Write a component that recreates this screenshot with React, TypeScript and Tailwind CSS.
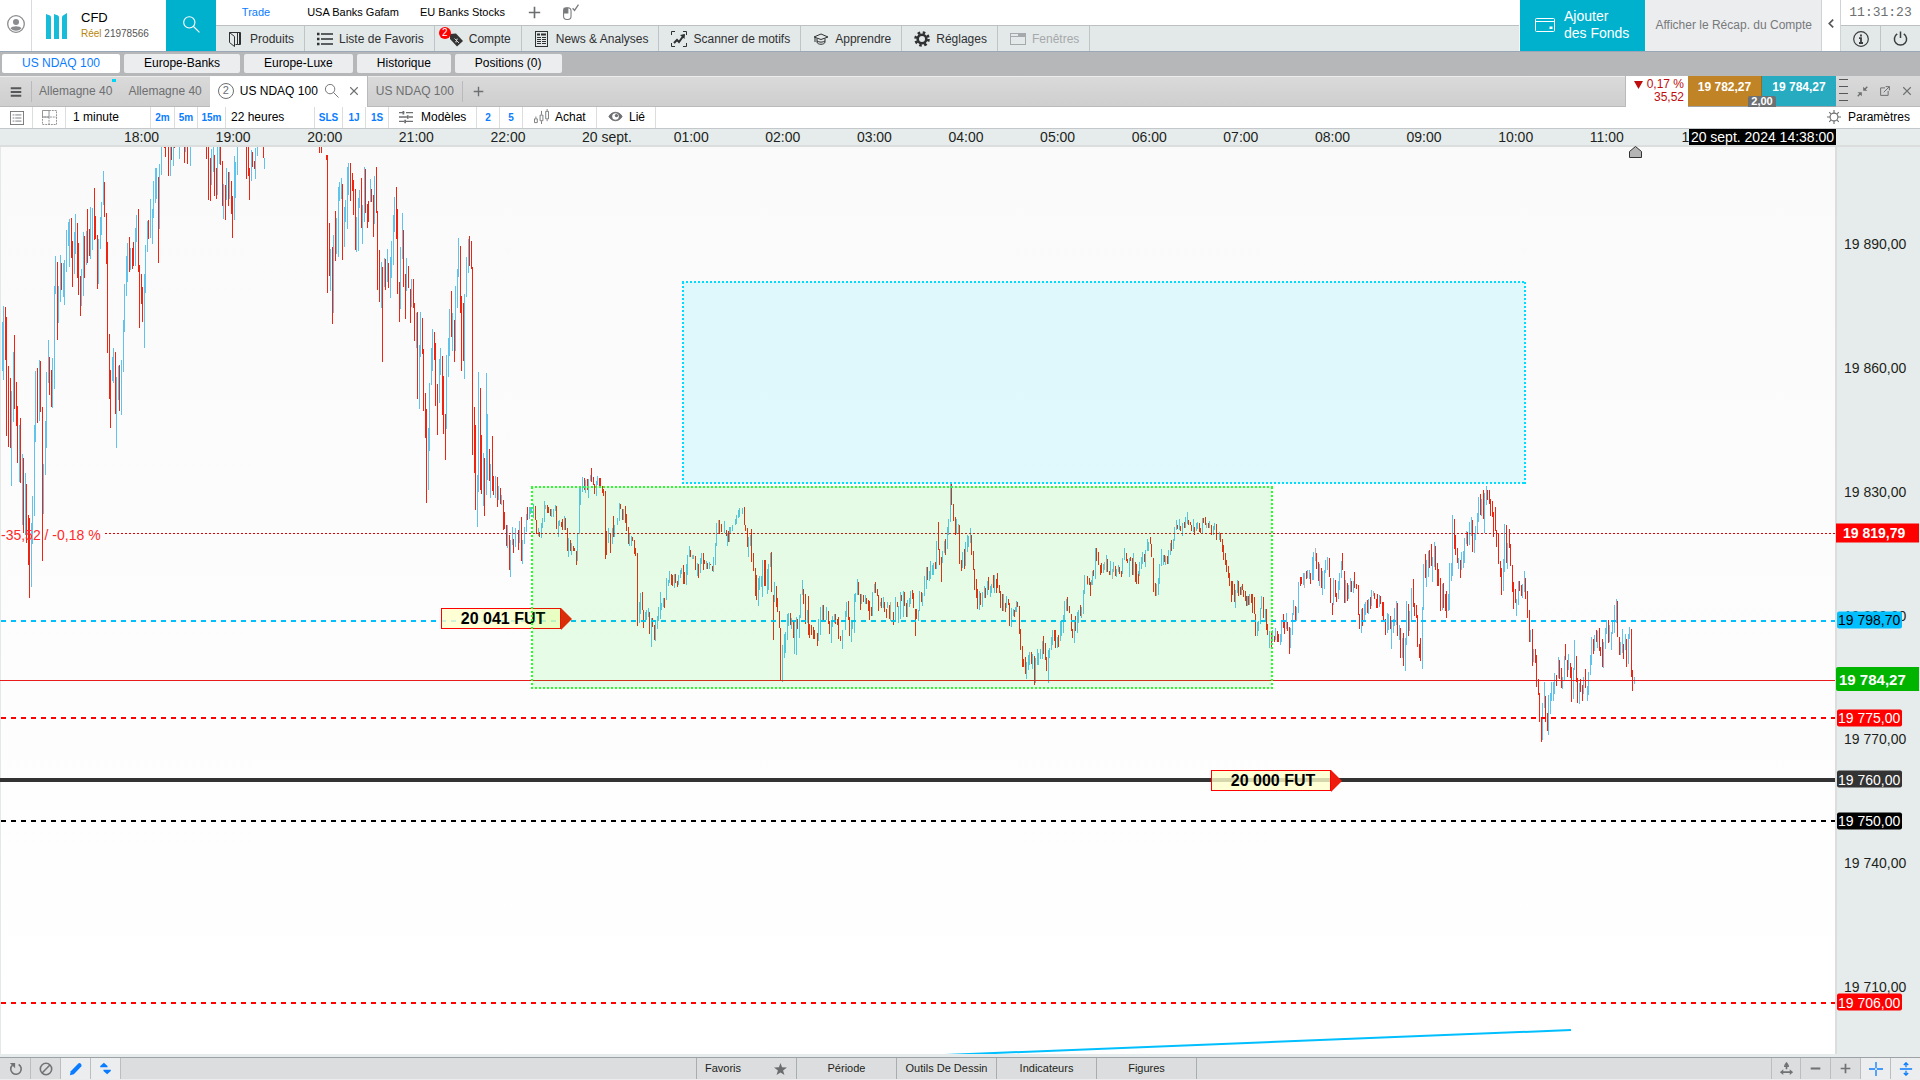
import React from 'react';

// ---------- market data ----------
// each bar is "x high low"; a segment has its own origin and step
type Segment = { ox: number; oy: number; sx: number; up: string; down: string; flat?: string };

const SEGMENTS: Segment[] = [
  {
    ox: 0, oy: -7, sx: 2.8,
    up: '8 546 693,10 498 720,32 753 1038,38 636 846,54 855 1025,63 942 1155,71 999 1185,88 1150 1340,90 1068 1212,96 855 1128,99 693 906,110 660 843,121 972 1121,127 843 1005,130 696 924,136 600 729,147 654 804,152 438 746,155 348 462,163 438 549,169 345 486,177 369 471,180 360 495,186 270 396,191 246 318,194 237 381,208 276 402,211 222 342,228 387 498,233 276 468,242 273 375,253 201 357,259 204 330,275 297 432,281 231 327,284 186 285,289 93 195,315 651 723,317 624 729,326 711 924,331 678 780,340 660 825,345 540 696,348 432 576,354 348 468,357 309 426,365 324 390,379 264 378,382 225 306,404 402 624,407 315 459,413 243 336,421 177 294,427 207 312,429 123 234,435 84 189,438 84 177,446 72 267,452 18 105,477 18 108,485 18 78,502 18 57,519 18 36,533 18 78,592 27 135,597 18 96,608 18 165,614 18 72,625 132 237,634 84 180,642 96 177,656 48 240,659 66 174,664 18 105,704 30 123,715 24 117,720 18 48,740 54 87,925 327 453,933 285 519,942 234 342,947 141 351,950 126 183,956 114 177,964 201 321,967 180 246,972 81 267,975 69 165,998 231 336,1003 174 333,1006 150 204,1014 195 312,1020 81 246,1037 117 186,1048 108 252,1068 366 504,1076 354 441,1085 327 426,1093 351 474,1096 303 414,1101 225 375,1104 171 276,1121 321 507,1127 219 357,1138 354 453,1152 417 501,1166 519 624,1174 615 807,1177 516 651,1199 864 1050,1202 729 933,1208 624 735,1211 567 693,1230 657 789,1233 624 705,1250 645 867,1255 594 711,1258 507 648,1266 519 633,1275 438 633,1281 387 504,1283 294 411,1300 462 717,1306 351 471,1311 297 399,1337 1005 1161,1339 696 1056,1353 939 1098,1362 699 1065,1364 822 1020,1373 972 1074,1387 1008 1074,1396 1038 1080,1404 1065 1095,1421 1155 1224,1429 1200 1311,1435 1161 1215,1443 1164 1221,1454 1143 1209,1463 1200 1272,1468 1161 1212,1474 1122 1176,1482 1101 1137',
    down: '15 501 660,18 531 888,23 678 921,29 714 924,40 585 807,46 726 858,49 798 969,57 834 1029,65 954 1179,74 1032 1209,79 1125 1275,82 1134 1374,104 684 849,113 663 816,119 801 1263,138 651 765,144 690 801,161 366 600,172 369 450,200 234 354,203 303 441,217 249 414,219 309 465,225 408 528,236 288 414,245 207 369,250 267 348,264 144 300,267 228 297,273 285 447,292 126 231,298 219 372,301 306 639,306 582 777,309 690 864,323 636 822,334 675 813,362 291 396,371 324 387,373 306 378,387 207 396,390 375 564,396 402 492,398 441 546,415 240 297,443 111 369,460 18 24,463 18 51,471 18 108,480 18 60,488 18 24,516 18 69,525 18 72,578 18 57,583 18 180,589 54 183,600 45 168,606 84 177,617 18 75,622 63 198,631 135 240,639 96 198,648 123 222,650 168 294,690 18 117,695 18 108,698 84 180,707 36 81,712 63 87,737 18 54,894 18 39,900 18 39,914 45 60,917 45 459,922 249 408,931 321 552,939 213 363,958 132 360,981 69 183,986 99 153,989 120 225,995 147 330,1012 114 264,1023 87 219,1029 192 264,1031 183 246,1040 147 186,1045 165 291,1054 81 219,1057 213 450,1062 330 486,1070 381 666,1079 357 450,1087 369 444,1110 141 297,1113 207 462,1118 426 546,1129 270 441,1135 402 537,1143 378 444,1149 447 549,1157 417 504,1160 489 603,1168 516 777,1182 534 642,1185 627 813,1191 759 894,1194 807 1089,1216 576 660,1219 609 798,1225 732 885,1239 648 825,1241 708 882,1247 822 960,1264 453 591,1272 540 666,1289 318 519,1292 468 693,1297 489 663,1314 288 378,1320 303 387,1323 381 945,1328 801 999,1331 855 1110,1345 744 1050,1348 885 1062,1356 954 1128,1370 927 1023,1378 888 1053,1381 1008 1065,1393 1011 1101,1401 1044 1092,1409 1080 1170,1412 1116 1167,1418 1155 1218,1426 1185 1290,1437 1197 1239,1451 1170 1230,1460 1131 1263,1477 1101 1137',
  },
  {
    ox: 500, oy: 293, sx: 3,
    up: '88 204 219,91 201 222,94 201 219,100 192 234,115 264 288,124 249 294,127 234 264,133 183 246,154 207 231,160 207 231,166 195 213,175 243 291,178 240 258,193 228 270,205 294 351,214 309 345,232 279 363,238 144 282,241 144 195,247 111 156,256 120 159,265 117 174,271 105 123,289 123 168,292 108 135,325 264 309,337 264 312,343 255 291,352 234 255,358 189 243,370 207 240,388 279 318,394 288 318,418 486 549,421 459 522,436 516 543,439 510 540,445 504 531,454 534 621,466 546 603,472 528 567,475 501 543,481 456 537,484 489 510,490 474 501,499 414 480,505 420 438,508 393 430,523 402 444,535 405 435,541 390 414,544 384 402,559 372 435,562 345 405,568 318 351,580 345 357,592 369 408,601 354 399,604 339 372,619 363 388,628 366 388,640 351 396,646 309 375,649 249 318,673 243 279,682 279 318,688 261 306,691 261 282,697 255 273,706 237 255,709 225 252,715 210 234,718 204 231,727 204 222,745 291 351,751 285 318,775 414 498,778 408 450,784 408 441,787 360 471,802 387 462,805 372 450,811 339 381,823 426 486,847 615 726,853 582 654,856 576 639,862 522 600,865 519 558,874 534 567,883 540 642,889 531 645,898 525 594,901 462 534,907 420 465,922 510 550,955 537 603,961 501 585,967 495 540,979 501 540,994 546 609,997 528 561,1003 522 549,1027 570 627,1036 513 570,1039 486 531,1054 543 606,1057 540 567,1063 462 579,1066 459 486,1072 417 465,1084 462 492,1096 465 492,1117 456 528,1123 432 460,1141 486 498,1150 471 504,1162 486 504,1186 471 540,1195 498 549,1201 456 537,1210 453 531,1222 480 531,1228 474 501,1231 453 492,1255 510 543,1258 453 513,1267 459 498,1273 408 468,1279 381 447,1288 393 423,1291 363 417,1297 375 405,1300 369 405',
    down: '82 201 240,106 198 240,109 240 282,118 276 291,142 195 219,145 201 219,151 207 228,169 198 267,184 246 261,187 237 270,196 234 270,202 264 333,211 300 333,220 318 333,223 324 333,229 333 375,253 114 150,262 117 150,274 84 126,280 111 135,283 132 162,298 114 138,301 114 138,307 138 159,310 147 168,316 153 357,319 273 345,331 279 339,340 228 291,361 192 207,367 207 240,376 198 249,379 222 273,385 261 312,397 291 303,403 300 342,406 324 348,412 339 558,427 456 510,430 510 564,448 516 582,457 534 561,463 555 600,493 474 504,514 402 435,517 405 438,526 402 430,532 423 441,550 375 432,553 396 432,571 330 350,586 348 390,595 372 414,610 339 390,613 360 372,622 369 388,631 372 375,637 378 393,658 240 282,664 252 276,679 270 288,685 273 306,733 201 255,736 255 273,742 264 321,754 267 366,760 339 393,766 384 468,769 405 480,793 360 438,796 360 438,814 336 456,820 465 600,829 438 501,832 474 516,838 513 564,841 564 720,871 519 555,880 546 594,892 537 567,910 447 492,916 462 552,925 468 585,928 552 594,934 555 585,940 561 597,943 570 597,952 579 618,970 495 543,985 513 552,988 543 582,1006 522 552,1012 537 555,1015 531 597,1021 588 603,1045 483 540,1048 531 588,1075 426 465,1081 462 510,1090 465 486,1099 474 492,1105 480 513,1108 483 540,1114 501 528,1126 426 459,1132 447 468,1135 465 513,1144 474 504,1153 486 516,1159 507 534,1168 495 537,1180 516 555,1192 486 501,1204 465 483,1213 456 498,1219 489 531,1237 450 477,1240 459 504,1246 507 588,1249 507 537,1264 456 486,1282 381 420,1306 366 387',
    flat: '136 195 207,655 240 282,577 345 357,1171 486 543',
  },
  {
    ox: 900, oy: 293, sx: 3,
    up: '109 303 387,127 333 369,133 303 339,142 261 327,145 237 285,151 126 246,169 237 282,187 336 384,196 306 378,202 285 336,205 288 320,211 264 309,238 453 510,247 456 501,253 438 474,262 423 465,271 438 471,274 432 460,283 405 459,310 462 513,319 468 504,334 504 561,340 507 528,346 501 516,349 483 516,379 666 717,385 645 690,388 636 675,397 642 687,406 654 730,412 627 675,415 639 675,421 627 657,427 603 657,445 630 729,448 624 654,454 591 630,457 570 615,472 591 624,481 543 603,484 543 588,490 525 579,493 483 543,499 477 513,523 543 609,532 516 579,535 510 549,544 501 534,550 450 522,553 405 462,562 408 435,574 420 435,577 393 435,586 324 417,610 372 399,619 345 396,631 363 405,640 366 396,649 387 411,655 375 396,667 354 402,673 324 360,688 354 411,700 339 405,715 393 432,718 366 408,724 351 387,727 336 372,736 330 381,742 297 333,745 306 333,775 414 465,778 372 432,784 327 378,790 345 375,796 348 375,805 330 372,811 309 345,820 297 327,823 261 303,829 240 270,838 237 270,847 249 288,856 231 264,862 216 252,880 237 276,889 249 273,892 246 267,907 234 279,928 243 264,940 258 285,943 249 270,958 276 300,1006 450 504,1012 420 459,1024 438 465,1042 468 498,1048 462 495,1072 546 588,1075 543 573,1081 504 552,1084 468 507,1096 507 540,1108 573 624',
    down: '115 246 330,118 327 375,124 351 426,136 297 345,154 132 195,160 192 243,166 231 285,178 255 372,184 360 393,193 327 387,214 285 345,220 333 390,223 387 450,229 417 474,232 447 507,241 459 495,256 444 474,265 411 450,280 405 444,289 417 459,292 399 444,298 435 459,301 453 504,307 462 513,316 489 516,325 477 495,328 489 558,343 510 531,352 486 501,358 498 582,361 567 630,367 618 681,370 657 681,376 651 702,394 636 672,403 648 735,430 588 642,436 609 660,439 651 693,463 570 603,466 570 624,475 585 621,502 471 513,508 498 519,514 522 573,517 567 594,526 528 573,541 495 528,562 408 432,568 414 435,571 426 468,580 390 407,589 324 363,595 336 375,601 375 405,604 369 399,622 357 396,628 393 405,646 378 408,658 381 402,664 393 411,679 339 363,682 357 369,691 351 363,697 354 405,706 366 426,709 372 432,715 402 432,733 342 366,751 291 312,754 312 351,760 354 456,766 429 468,793 345 366,802 348 372,814 300 333,832 255 267,841 258 273,853 246 264,865 240 255,871 246 255,874 255 273,883 261 285,898 249 276,901 264 279,910 234 249,916 231 255,925 249 264,934 255 285,949 252 300,961 279 306,967 297 336,970 315 360,976 339 375,979 360 396,985 378 414,988 399 438,994 423 486,997 423 465,1003 432 486,1015 423 468,1021 441 465,1027 432 450,1030 450 471,1036 453 483,1039 468 498,1045 468 495,1054 462 489,1057 462 519,1063 471 522,1066 522 588,1090 471 534,1099 507 570,1102 552 585,1114 573 621',
    flat: '175 252 282,613 366 390,637 387 417,769 432 468,919 249 264',
  },
  {
    ox: 1270, oy: 293, sx: 3,
    up: '7 570 606,16 564 600,31 582 615,34 543 606,49 519 567,61 564 624,67 519 585,70 480 525,79 501 543,85 426 519,100 399 435,112 390 414,118 390 417,127 351 420,130 336 420,148 372 438,157 393 465,163 390 447,166 360 399,172 351 390,190 414 495,205 423 477,208 399 450,214 363 414,226 420 489,235 435 477,241 414 456,250 423 459,274 507 579,283 492 540,286 486 525,295 477 522,304 450 498,328 465 501,352 519 579,355 522 570,364 540 627,370 537 579,373 504 558,379 483 555,388 555 600,397 594 654,406 594 693,409 483 615,418 513 573,424 444 540,457 501 687,460 372 510,469 360 441,475 333 411,487 351 426,493 306 381,517 432 510,535 462 513,538 369 510,544 369 423,547 225 408,565 354 387,574 336 390,580 333 384,583 294 369,589 273 312,598 246 315,604 231 288,613 282 339,616 258 300,622 219 279,625 171 246,634 177 228,643 159 279,649 138 195,700 357 453,703 252 396,712 309 387,739 477 528,745 423 495,757 432 474,763 393 456,781 570 606,790 627 666,817 789 900,823 726 804,835 765 885,841 759 822,844 726 783,850 726 783,853 699 762,865 651 714,877 711 747,883 648 720,895 642 690,910 684 777,913 600 690,928 729 792,940 711 762,952 738 783,955 696 765,961 645 705,964 591 675,973 585 633,982 573 624,1000 606 684,1006 564 627,1009 540 582,1018 555 606,1024 576 630,1027 543 582,1033 495 579,1039 477 549,1051 606 645,1057 567 639,1066 582 630,1075 582 672,1078 561 597,1093 711 732',
    down: '4 573 621,13 588 606,22 573 606,25 582 606,40 522 564,43 546 582,52 546 573,58 561 642,76 498 543,91 411 438,94 411 432,109 393 417,121 399 432,139 339 387,145 366 423,154 384 444,178 354 411,181 414 489,187 489 525,196 420 471,199 459 486,217 339 390,223 393 489,232 429 483,244 423 456,253 396 444,259 432 447,265 435 525,268 522 567,277 504 558,292 480 519,301 471 507,313 459 477,319 477 504,322 462 504,331 468 492,337 486 528,340 486 540,346 537 585,361 528 567,382 489 588,391 564 654,400 579 678,415 492 588,430 417 501,433 489 528,439 495 534,442 525 621,448 612 654,451 594 663,466 342 414,478 330 384,484 312 378,496 318 390,502 369 438,505 387 438,511 414 513,520 429 504,526 462 513,529 453 534,553 237 327,556 285 345,562 324 369,571 360 414,592 276 318,607 240 336,631 162 225,640 150 237,652 150 180,658 150 192,661 177 228,667 183 231,670 216 291,676 201 273,679 270 321,685 279 372,691 363 411,694 384 465,709 255 369,718 267 324,721 312 378,727 375 456,730 426 507,736 447 489,748 423 453,754 435 468,766 414 477,772 453 534,778 510 606,787 567 678,796 627 669,799 645 741,805 717 765,808 759 846,814 834 906,826 768 846,832 819 873,859 705 738,868 660 717,874 684 744,886 612 660,892 660 711,901 669 714,904 681 786,919 648 726,922 714 789,931 717 756,937 735 783,946 687 744,970 597 642,979 570 606,988 564 633,991 621 648,997 597 681,1015 540 609,1042 483 591,1048 591 645,1060 612 657,1069 597 681,1084 567 711,1087 690 753',
    flat: '103 399 444,136 324 363,310 453 468',
  },
];

const toPath = (seg: Segment, data = '') =>
  data
    .split(',')
    .filter(Boolean)
    .map((bar) => {
      const [x, hi, lo] = bar.split(' ').map(Number);
      return `M${seg.ox + Math.floor(x / seg.sx) + 0.5} ${Math.round(hi / 3) + seg.oy}V${Math.round(lo / 3) + seg.oy}`;
    })
    .join('');

const HOURS = ['18:00', '19:00', '20:00', '21:00', '22:00', '20 sept.', '01:00', '02:00', '03:00', '04:00', '05:00', '06:00', '07:00', '08:00', '09:00', '10:00', '11:00', '12:00'];
const PRICES = ['19 890,00', '19 860,00', '19 830,00', '19 800,00', '19 770,00', '19 740,00', '19 710,00'];

const CHART_H = 907;
const priceY = (p: number) => 343.5 + (19830 - p) * 4.128;
const topOf = (p: number) => ({ top: `${(priceY(p) / CHART_H) * 100}%` });

const TAGS = [
  { price: 19819.79, label: '19 819,79', cls: '-left-px right-px h-[19px] pl-[7px] bg-[#ff0000] text-white font-bold text-sm' },
  { price: 19798.7, label: '19 798,70', cls: 'left-0 w-[65px] h-[17px] pl-px rounded-xs bg-[#00bfff] text-black text-sm' },
  { price: 19784.27, label: '19 784,27', cls: '-left-px right-px h-6 pl-[3px] rounded-l-xs bg-[#00b400] text-white font-bold text-[15px]' },
  { price: 19775, label: '19 775,00', cls: 'left-0 w-[65px] h-[17px] pl-px rounded-xs bg-[#ff0000] text-white text-sm' },
  { price: 19760, label: '19 760,00', cls: 'left-0 w-[65px] h-[17px] pl-px rounded-xs bg-[#333333] text-white text-sm' },
  { price: 19750, label: '19 750,00', cls: 'left-0 w-[65px] h-[17px] pl-px rounded-xs bg-black text-white text-sm' },
  { price: 19706, label: '19 706,00', cls: 'left-0 w-[65px] h-[17px] pl-px rounded-xs bg-[#ff0000] text-white text-sm' },
];

// ---------- icons ----------
const Icon = ({ size = 16, className = '', children }: { size?: number; className?: string; children: React.ReactNode }) => (
  <svg width={size} height={size} viewBox="0 0 16 16" fill="none" stroke="currentColor" className={`shrink-0 ${className}`} aria-hidden="true">
    {children}
  </svg>
);

const BookIcon = () => (
  <Icon>
    <path d="M1.5 1.5h8v12h-2M1.5 1.5v10l5 4v-10zM1.5 1.5h11v12h-3" />
    <path d="M12 2v11" strokeWidth="2" />
  </Icon>
);
const ListIcon = () => (
  <Icon>
    <path d="M4 3h12M4 8h12M4 13h12" strokeWidth="1.5" />
    <path d="M0 3h2.5M0 8h2.5M0 13h2.5" strokeWidth="2.5" />
  </Icon>
);
const NewsIcon = () => (
  <Icon>
    <rect x="1.5" y=".5" width="12" height="15" />
    <path d="M3 3.5h3M7 3.5h5" strokeWidth="2" />
    <path d="M3 6.5h4M8 6.5h4M3 8.5h4M8 8.5h4M3 10.5h4M8 10.5h4M3 12.5h4M8 12.5h4" />
  </Icon>
);
const ScanIcon = () => (
  <Icon>
    <path d="M.5 4V.5H4M12 .5h3.5V4M.5 12v3.5H4M12 15.5h3.5V12" />
    <path d="M3 12l3-3 2 2 5-7" strokeWidth="2" />
    <path d="M9 4l5-1-.5 5z" fill="currentColor" stroke="none" />
  </Icon>
);
const LearnIcon = () => (
  <Icon>
    <path d="M1 6l7-3 7 3-7 2.5zM4 7.5V11c0 3 8 3 8 0V7.5M4 10c2 1.5 6 1.5 8 0M2 6.5V11" />
  </Icon>
);
const GearIcon = () => (
  <Icon>
    <circle cx="8" cy="8" r="4.3" strokeWidth="2.6" />
    <circle cx="8" cy="8" r="6.5" strokeWidth="2.6" strokeDasharray="2.55 2.55" />
  </Icon>
);
const WindowIcon = () => (
  <Icon>
    <rect x=".5" y="2.5" width="15" height="11" />
    <path d="M1 5.5h14" />
    <path d="M8 4h7" strokeWidth="2" />
  </Icon>
);
const TagIcon = () => (
  <span className="relative flex">
    <Icon>
      <path d="M3 3l6-.5 7 7.5-6 5.5L3 8z" fill="#333" stroke="none" />
      <path d="M11 8.5c-1-1-2.5 0-1.5 1s0 2-1.5 1M7.5 7.5l4.5 4.5" stroke="#e3e8e8" strokeWidth=".9" />
    </Icon>
    <span className="absolute -top-1 -left-2 flex h-3 w-3 items-center justify-center rounded-full bg-[#ff0000] text-[10px] text-white">2</span>
  </span>
);
const SearchIcon = ({ size = 16, className = '' }) => (
  <Icon size={size} className={className}>
    <circle cx="6.5" cy="6.5" r="5" />
    <path d="M10 10l5.5 5.5" />
  </Icon>
);
const CloseIcon = ({ size = 10 }) => (
  <Icon size={size}>
    <path d="M2 2l12 12M14 2L2 14" strokeWidth="1.8" />
  </Icon>
);
const PlusIcon = ({ size = 12 }) => (
  <Icon size={size}>
    <path d="M8 1v14M1 8h14" strokeWidth="2" />
  </Icon>
);

// ---------- header ----------
const MENU = [
  { label: 'Produits', icon: <BookIcon /> },
  { label: 'Liste de Favoris', icon: <ListIcon /> },
  { label: 'Compte', icon: <TagIcon /> },
  { label: 'News & Analyses', icon: <NewsIcon /> },
  { label: 'Scanner de motifs', icon: <ScanIcon /> },
  { label: 'Apprendre', icon: <LearnIcon /> },
  { label: 'Réglages', icon: <GearIcon /> },
  { label: 'Fenêtres', icon: <WindowIcon />, disabled: true },
];

const Header = () => (
  <header className="flex h-[52px] shrink-0 border-b border-[#9ba6b6] bg-white">
    <button aria-label="Profil" className="flex w-8 items-center justify-center border-r border-[#d9dadb] pb-1 text-[#8a8c8e]">
      <svg width="18" height="18" viewBox="0 0 18 18" fill="none" stroke="currentColor">
        <circle cx="9" cy="9" r="8.3" strokeWidth="1.3" />
        <circle cx="9" cy="7" r="3" fill="currentColor" stroke="none" />
        <path d="M3.5 13.5c1-3 10-3 11 0a8 8 0 0 1-11 0z" fill="currentColor" stroke="none" />
      </svg>
    </button>
    <div className="flex w-[134px] items-center gap-3.5 pl-3.5">
      <svg width="21" height="26" viewBox="0 0 21 26" fill="#17bcd8">
        <path d="M0 1l4 1.5q1 .5 1 2V26H0zM8 1l4 1.5q1 .5 1 2V26H8zM21 0v26h-5V4.5q0-1.5 1-2z" />
      </svg>
      <div className="leading-4">
        <p className="text-[13px] text-black">CFD</p>
        <p className="text-[10px] whitespace-nowrap text-[#555]"><span className="text-[#b8860b]">Réel</span> 21978566</p>
      </div>
    </div>
    <button aria-label="Rechercher" className="flex w-[50px] items-center justify-center bg-[#00b1cd] pb-1 text-white">
      <SearchIcon size={18} />
    </button>
    <div className="flex min-w-0 flex-1 flex-col">
      <div className="flex h-[26px] items-center border-b border-[#bcc0c3] text-[11px] text-black">
        <button className="w-20 text-[#0a7cff]">Trade</button>
        <button className="w-[114px]">USA Banks Gafam</button>
        <button className="w-[105px]">EU Banks Stocks</button>
        <button aria-label="Ajouter un espace" className="flex w-[38px] justify-center text-[#6b6d6f]"><PlusIcon size={13} /></button>
        <button aria-label="Verrouiller" className="flex w-[34px] justify-center text-[#77797b]">
          <Icon size={17}>
            <rect x="1.5" y="3.5" width="7" height="11" rx="3" />
            <path d="M2 4h3.5v4.5H2z" fill="currentColor" />
            <path d="M10 4l1.8 2L15.5.5" strokeWidth="1.2" />
          </Icon>
        </button>
      </div>
      <nav className="flex flex-1 bg-[#e3e8e8] text-xs text-[#2f3133]">
        {MENU.map((m) => (
          <button
            key={m.label}
            disabled={m.disabled}
            className={`flex shrink-0 items-center gap-1.5 border-r border-[#bfc4c6] pr-[10px] pl-3 whitespace-nowrap ${m.disabled ? 'text-[#a6a9ab]' : ''}`}
          >
            {m.icon}
            {m.label}
          </button>
        ))}
      </nav>
    </div>
    <button className="ml-px flex w-[125px] items-center gap-[9px] bg-[#00b1cd] pb-0.5 pl-[15px] text-left text-sm leading-[17px] text-white">
      <svg width="20" height="14" viewBox="0 0 20 14" fill="none" stroke="currentColor">
        <rect x=".5" y=".5" width="19" height="13" rx="1" />
        <path d="M1 3.5h18" />
        <path d="M14.5 8.5h3v2.5h-3z" fill="currentColor" stroke="none" />
      </svg>
      <span>Ajouter<br />des Fonds</span>
    </button>
    <button className="w-44 bg-[#ecedef] pr-[9px] pb-0.5 text-right text-xs whitespace-nowrap text-[#77797b]">Afficher le Récap. du Compte</button>
    <button aria-label="Réduire" className="flex w-5 items-center justify-center border-x border-[#d0d3d5] pb-1 text-[#55575a]">
      <Icon size={9}><path d="M11 1L4 8l7 7" strokeWidth="3" /></Icon>
    </button>
    <div className="flex w-[79px] flex-col">
      <time className="flex h-[26px] items-center justify-center border-b border-[#bcc0c3] font-['Liberation_Mono',monospace] text-[13px] text-[#6d6f71]">11:31:23</time>
      <div className="flex flex-1 bg-[#e3e8e8] text-[#3a3c3e]">
        <button aria-label="Informations" className="flex flex-1 items-center justify-center border-r border-[#bfc4c6]">
          <Icon>
            <circle cx="8" cy="8" r="7.3" strokeWidth="1.2" />
            <path d="M8 3.5v2M6 7.2h2V12M6 12h4" strokeWidth="1.8" />
          </Icon>
        </button>
        <button aria-label="Quitter" className="flex flex-1 items-center justify-center">
          <Icon size={15}>
            <path d="M4.5 3a6.5 6.5 0 1 0 7 0M8 .5v7" strokeWidth="1.6" />
          </Icon>
        </button>
      </div>
    </div>
  </header>
);

const WORKSPACES = ['US NDAQ 100', 'Europe-Banks', 'Europe-Luxe', 'Historique', 'Positions (0)'];

const Workspaces = () => (
  <nav className="flex h-6 shrink-0 gap-1 bg-[#b5b7b9] px-0.5 pt-0.5 pb-[3px] text-xs">
    {WORKSPACES.map((w, i) => (
      <button key={w} className={`rounded-xs px-5 pb-0.5 ${i === 0 ? 'bg-white text-[#0a7cff]' : 'bg-[#ecedef] text-black'}`}>
        {w}
      </button>
    ))}
  </nav>
);

// ---------- instrument tabs + quote ----------
const InstrumentBar = () => (
  <div className="flex h-[31px] shrink-0 bg-linear-to-b from-[#dadada] to-[#cecece] text-xs text-[#6d6f71]">
    <div className="flex min-w-0 flex-1 border-t border-b border-t-[#ececec] border-b-[#b9babb]">
      <button aria-label="Menu" className="my-1 flex w-8 items-center justify-center border-r border-[#b9babb] text-[#555759]">
        <Icon size={12}><path d="M1 3h14M1 8h14M1 13h14" strokeWidth="2.5" /></Icon>
      </button>
      <button className="relative pr-2 pb-0.5 pl-[7px]">
        Allemagne 40
        <span className="absolute top-0.5 right-1 h-[3px] w-1 bg-[#00d5f5]" />
      </button>
      <button className="px-2 pb-0.5">Allemagne 40</button>
      <div className="-my-px flex items-center gap-1.5 border-r border-[#b9babb] bg-white px-2 pb-0.5">
        <span className="flex h-4 w-4 items-center justify-center rounded-full border border-[#6d6f71] text-[11px]">2</span>
        <button className="text-black">US NDAQ 100</button>
        <button aria-label="Chercher un produit"><SearchIcon size={15} /></button>
        <button aria-label="Fermer l'onglet" className="ml-1"><CloseIcon /></button>
      </div>
      <button className="px-2 pb-0.5">US NDAQ 100</button>
      <button aria-label="Nouvel onglet" className="my-1 flex w-8 items-center justify-center border-l border-[#b9babb]"><PlusIcon size={11} /></button>
    </div>
    <div className="w-[63px] border-l border-[#b9babb] bg-white pt-0.5 pr-1 text-right leading-[13px] text-[#c00d0d]">
      <p className="flex items-center justify-end gap-1">
        <svg width="9" height="8" viewBox="0 0 9 8" fill="currentColor"><path d="M0 0h9L4.5 8z" /></svg>
        0,17 %
      </p>
      <p>35,52</p>
    </div>
    <div className="relative flex border-b border-[#a0a3a5] font-bold text-white">
      <button className="w-[74px] border-r border-[#9a6a1e] bg-[#c08326] pb-2">19 782,27</button>
      <button className="w-[74px] bg-[#27abc0] pb-2">19 784,27</button>
      <span className="absolute -bottom-px left-[60px] flex h-[11px] w-7 items-center justify-center rounded-t-xs bg-[#6d7173] text-[11px]">2,00</span>
    </div>
    <div className="flex w-[84px] items-center justify-between border-b border-[#b9babb] pr-2 pl-[3px]">
      <svg width="9" height="26" viewBox="0 0 9 26" stroke="#55585a" className="shrink-0"><path d="M0 1.5h9M0 8.5h9M0 15.5h9M0 22.5h9" /></svg>
      <div className="flex items-center gap-3">
        <button aria-label="Réduire">
          <Icon size={11}>
            <path d="M15 1l-4 4M1 15l4-4" strokeWidth="2" />
            <path d="M9 1v6h6zM1 9h6v6z" fill="currentColor" stroke="none" />
          </Icon>
        </button>
        <button aria-label="Détacher">
          <Icon size={10}><path d="M8 3H1v12h12V8M9 1h6v6M15 1L6 10" strokeWidth="1.6" /></Icon>
        </button>
        <button aria-label="Fermer"><CloseIcon /></button>
      </div>
    </div>
  </div>
);

// ---------- chart toolbar ----------
const cell = 'flex shrink-0 items-center border-r border-[#dcdddd]';
const quick = 'justify-center text-[10px] font-bold text-[#0a7cff]';

const Toolbar = () => (
  <div className="flex h-[22px] shrink-0 border-b border-[#c5c8ca] bg-white text-xs text-black">
    <button aria-label="Liste" className={`${cell} w-[33px] justify-center pl-0.5 text-[#6d6f71]`}>
      <Icon size={14}><rect x=".5" y=".5" width="15" height="15" /><path d="M3 4.5h2M6 4.5h7M3 8h2M6 8h7M3 11.5h2M6 11.5h7" /></Icon>
    </button>
    <button aria-label="Grille" className={`${cell} w-[33px] justify-center text-[#8a8c8e]`}>
      <Icon size={15}><path d="M.5.5h7v7h-7z" /><path d="M7.5.5h8v15H.5v-8h15M7.5 7.5v8" strokeDasharray="2 1" /></Icon>
    </button>
    <button className={`${cell} w-[85px] pb-0.5 pl-[7px]`}>1 minute</button>
    <button className={`${cell} ${quick} w-6`}>2m</button>
    <button className={`${cell} ${quick} w-[23px]`}>5m</button>
    <button className={`${cell} ${quick} w-7`}>15m</button>
    <button className={`${cell} w-[89px] pb-0.5 pl-[5px]`}>22 heures</button>
    <button className={`${cell} ${quick} w-7`}>SLS</button>
    <button className={`${cell} ${quick} w-[23px]`}>1J</button>
    <button className={`${cell} ${quick} w-[23px]`}>1S</button>
    <button className={`${cell} w-[88px] gap-2 pb-0.5 pl-[10px]`}>
      <Icon size={14} className="text-[#6d6f71]">
        <path d="M0 3h6M8 3h8M0 8h9M11 8h5M0 13h6M8 13h8" strokeWidth="1.5" />
        <path d="M5 1v4M10 6v4M7 11v4" strokeWidth="2" />
      </Icon>
      Modèles
    </button>
    <button className={`${cell} ${quick} w-[23px]`}>2</button>
    <button className={`${cell} ${quick} w-[23px]`}>5</button>
    <button className={`${cell} w-[74px] gap-1.5 pb-0.5 pl-[11px]`}>
      <Icon size={15} className="text-[#77797b]">
        <path d="M.5 10.5h3v4h-3zM6.5 6.5h3v6h-3zM12.5 2.5h3v8h-3zM2 8v2M8 2v4M8 13v3M14 0v2M14 11v2" />
      </Icon>
      Achat
    </button>
    <button className={`${cell} w-[59px] gap-1.5 pb-0.5 pl-[11px]`}>
      <Icon size={15} className="text-[#6d6f71]">
        <path d="M1 8c3-6 11-6 14 0-3 6-11 6-14 0z" fill="currentColor" />
        <circle cx="8" cy="8" r="3.5" fill="#fff" stroke="none" />
        <circle cx="9" cy="7" r="1.8" fill="currentColor" stroke="none" />
      </Icon>
      Lié
    </button>
    <button className="ml-auto flex items-center gap-[7px] pr-[10px] pb-0.5">
      <Icon size={14} className="text-[#6d6f71]">
        <circle cx="8" cy="8" r="4.5" strokeWidth="1.3" />
        <path d="M8 0v3.5M8 12.5V16M0 8h3.5M12.5 8H16M2.5 2.5l2 2M11.5 11.5l2 2M2.5 13.5l2-2M11.5 4.5l2-2" strokeWidth="1.3" />
      </Icon>
      Paramètres
    </button>
  </div>
);

const TimeAxis = () => (
  <div className="relative h-[18px] shrink-0 border-b-2 border-[#dcdddd] bg-[#e6ecec] pr-[147px] pl-[124px] text-sm leading-[17px] text-[#1d1f20]">
    <div className="grid grid-cols-[repeat(18,minmax(0,1fr))] whitespace-nowrap">
      {HOURS.map((h) => <span key={h}>{h}</span>)}
    </div>
    <span className="absolute top-0 right-[84px] h-4 w-[147px] bg-black text-center leading-4 whitespace-nowrap text-white">20 sept. 2024 14:38:00</span>
  </div>
);

const Flag = ({ label, className }: { label: string; className: string }) => (
  <div className={`absolute flex ${className}`}>
    <span className="flex h-[21px] w-[120px] items-center justify-center border border-[#ff0000] bg-[#ffffcc]/80 pl-1 text-base leading-none font-bold text-black">{label}</span>
    <svg width="11" height="22" viewBox="0 0 11 22" fill="#ee1c0c"><path d="M0 0L11 11 0 22z" /></svg>
  </div>
);

const Chart = () => (
  <main className="flex min-h-96 flex-1">
    <div className="relative min-w-0 flex-1 border-l border-[#e6e8e8] bg-linear-to-b from-[#fafafa] to-white">
      <svg className="absolute inset-y-0 right-0 -left-px h-full w-[calc(100%+1px)]" viewBox={`0 0 1835 ${CHART_H}`} preserveAspectRatio="none" fill="none" shapeRendering="crispEdges">
        {SEGMENTS.map((seg) => (
          <g key={seg.ox}>
            <path d={toPath(seg, seg.up)} stroke="#5fc3ec" />
            <path d={toPath(seg, seg.down)} stroke="#ee2410" />
            <path d={toPath(seg, seg.flat)} stroke="#b5b5b5" />
          </g>
        ))}
        <path d="M105 386.5H1835" stroke="#e00000" strokeDasharray="2 2" />
        <path d="M1 474H1835" stroke="#00bfff" strokeWidth="2" strokeDasharray="5 5" />
        <path d="M0 533.5H1835" stroke="#e81c1c" />
        <path d="M1 571H1835" stroke="#ff0000" strokeWidth="2" strokeDasharray="5 5" />
        <path d="M0 633H1835" stroke="#333" strokeWidth="4" />
        <path d="M1 674H1835" stroke="#000" strokeWidth="2" strokeDasharray="5 5" />
        <path d="M1 856H1835" stroke="#ff0000" strokeWidth="2" strokeDasharray="5 5" />
        <path d="M945 908L1571 883" stroke="#00bfff" strokeWidth="2" shapeRendering="auto" />
      </svg>
      <Flag label="20 041 FUT" className="top-[461px] left-[440px]" />
      <Flag label="20 000 FUT" className="top-[623px] left-[1210px]" />
      <svg className="absolute inset-y-0 right-0 -left-px h-full w-[calc(100%+1px)]" viewBox={`0 0 1835 ${CHART_H}`} preserveAspectRatio="none" shapeRendering="crispEdges">
        <rect x="683" y="135" width="842" height="201" fill="#00e0fb" fillOpacity=".11" />
        <path d="M682 135H1526M682 336H1526M683 135V337M1525 135V337" stroke="#00dcff" strokeWidth="2" strokeDasharray="2 2" />
        <rect x="532" y="340" width="740" height="201" fill="#00f000" fillOpacity=".09" />
        <path d="M531 340H1273M531 541H1273M532 340V542M1272 340V542" stroke="#28ff28" strokeWidth="2" strokeDasharray="2 2" />
      </svg>
      <p className="absolute top-[380px] left-0 text-sm leading-4 text-[#ff2a2a]">-35,52 / -0,18 %</p>
      <svg className="absolute -top-px left-[1628px]" width="13" height="12" viewBox="0 0 13 12" fill="#b4b4b4" stroke="#333"><path d="M.5 11.5V5.5L6.5.5l6 5v6z" /></svg>
    </div>
    <aside className="relative flex w-[85px] shrink-0 flex-col border-l-2 border-[#dcdddd] bg-[#e6ecec] pt-[35px] pb-[5px] text-sm text-[#1d1f20]">
      {PRICES.map((p) => <span key={p} className="flex flex-1 items-center pl-[7px]">{p}</span>)}
      {TAGS.map((t) => (
        <span key={t.label} style={topOf(t.price)} className={`absolute flex -translate-y-1/2 items-center whitespace-nowrap ${t.cls}`}>{t.label}</span>
      ))}
    </aside>
  </main>
);

// ---------- footer ----------
const tool = 'flex w-[30px] items-center justify-center border-r border-[#bbbdbf]';
const menu = 'w-[100px] border-r border-[#aaadaf]';

const Footer = () => (
  <footer className="shrink-0 border-b border-[#ececec] bg-[#e6ecec] pt-[3px]">
    <div className="flex h-[22px] border-t border-[#9da2a4] bg-[#dcddde] text-[11px] text-[#1d1f20]">
      <div className="flex flex-[1_1_0px] pl-px text-[#707274]">
        <button aria-label="Actualiser" className={tool}>
          <Icon size={14}><path d="M4 3.5A6 6 0 1 0 11 2.8" strokeWidth="1.8" /><path d="M1 1h6v6z" fill="currentColor" stroke="none" /></Icon>
        </button>
        <button aria-label="Effacer" className={tool}>
          <Icon size={14}><circle cx="8" cy="8" r="6.5" strokeWidth="1.8" /><path d="M3.5 12.5l9-9" strokeWidth="1.8" /></Icon>
        </button>
        <button aria-label="Dessiner" className={`${tool} bg-[#ecedef] text-[#0a7cff]`}>
          <Icon size={14}><path d="M1 15l1-4.500L11 1.500q1-1 2.500.500t.5 3L5.500 14z" fill="currentColor" stroke="none" /></Icon>
        </button>
        <button aria-label="Échelle" className={`${tool} bg-[#ecedef] text-[#0a7cff]`}>
          <Icon size={13}><path d="M1.500 5l4.500-4 4.500 4v1.500h-9zM5.500 9.500h9V11L10 15l-4.500-4z" fill="currentColor" stroke="none" /></Icon>
        </button>
      </div>
      <button className="flex w-[101px] items-center justify-between border-x border-[#aaadaf] pr-[9px] pl-2">
        Favoris
        <svg width="13" height="12" viewBox="0 0 14 13" fill="#6b6d6f"><path d="M7 0l1.700 4.700 5.300.2-4.200 3.200L11.300 13 7 10.200 2.700 13l1.500-4.900L0 4.900l5.300-.2z" /></svg>
      </button>
      <button className={menu}>Période</button>
      <button className={menu}>Outils De Dessin</button>
      <button className={menu}>Indicateurs</button>
      <button className={menu}>Figures</button>
      <div className="flex flex-[1_1_28px] justify-end text-[#707274]">
        <button aria-label="Ajuster" className={`${tool} border-l`}>
          <Icon size={13}><path d="M8 1v8M5 5h6M1 12.500h14" strokeWidth="2" /><path d="M5 4l3-4 3 4zM0 12.500L4 9v7zM16 12.500L12 9v7z" fill="currentColor" stroke="none" /></Icon>
        </button>
        <button aria-label="Zoom arrière" className={tool}><Icon size={11}><path d="M1 8h14" strokeWidth="3" /></Icon></button>
        <button aria-label="Zoom avant" className={tool}><Icon size={11}><path d="M8 1v14M1 8h14" strokeWidth="2.5" /></Icon></button>
        <button aria-label="Réticule" className={`${tool} bg-[#ecedef] text-[#0a7cff]`}>
          <Icon size={14}><path d="M8 0v7M8 9v7M0 8h7M9 8h7" strokeWidth="1.5" /></Icon>
        </button>
        <button aria-label="Étirer" className="flex w-[29px] items-center justify-center bg-[#ecedef] text-[#0a7cff]">
          <Icon size={14}><path d="M1 8h14M8 1v5M8 10v5M5.500 3.500L8 1l2.500 2.500M5.500 12.500L8 15l2.500-2.500" strokeWidth="1.5" /></Icon>
        </button>
      </div>
    </div>
  </footer>
);

export default function App() {
  return (
    <div className="flex min-h-screen flex-col bg-[#e6ecec] font-['Liberation_Sans',Arial,sans-serif]">
      <Header />
      <Workspaces />
      <InstrumentBar />
      <Toolbar />
      <TimeAxis />
      <Chart />
      <Footer />
    </div>
  );
}
